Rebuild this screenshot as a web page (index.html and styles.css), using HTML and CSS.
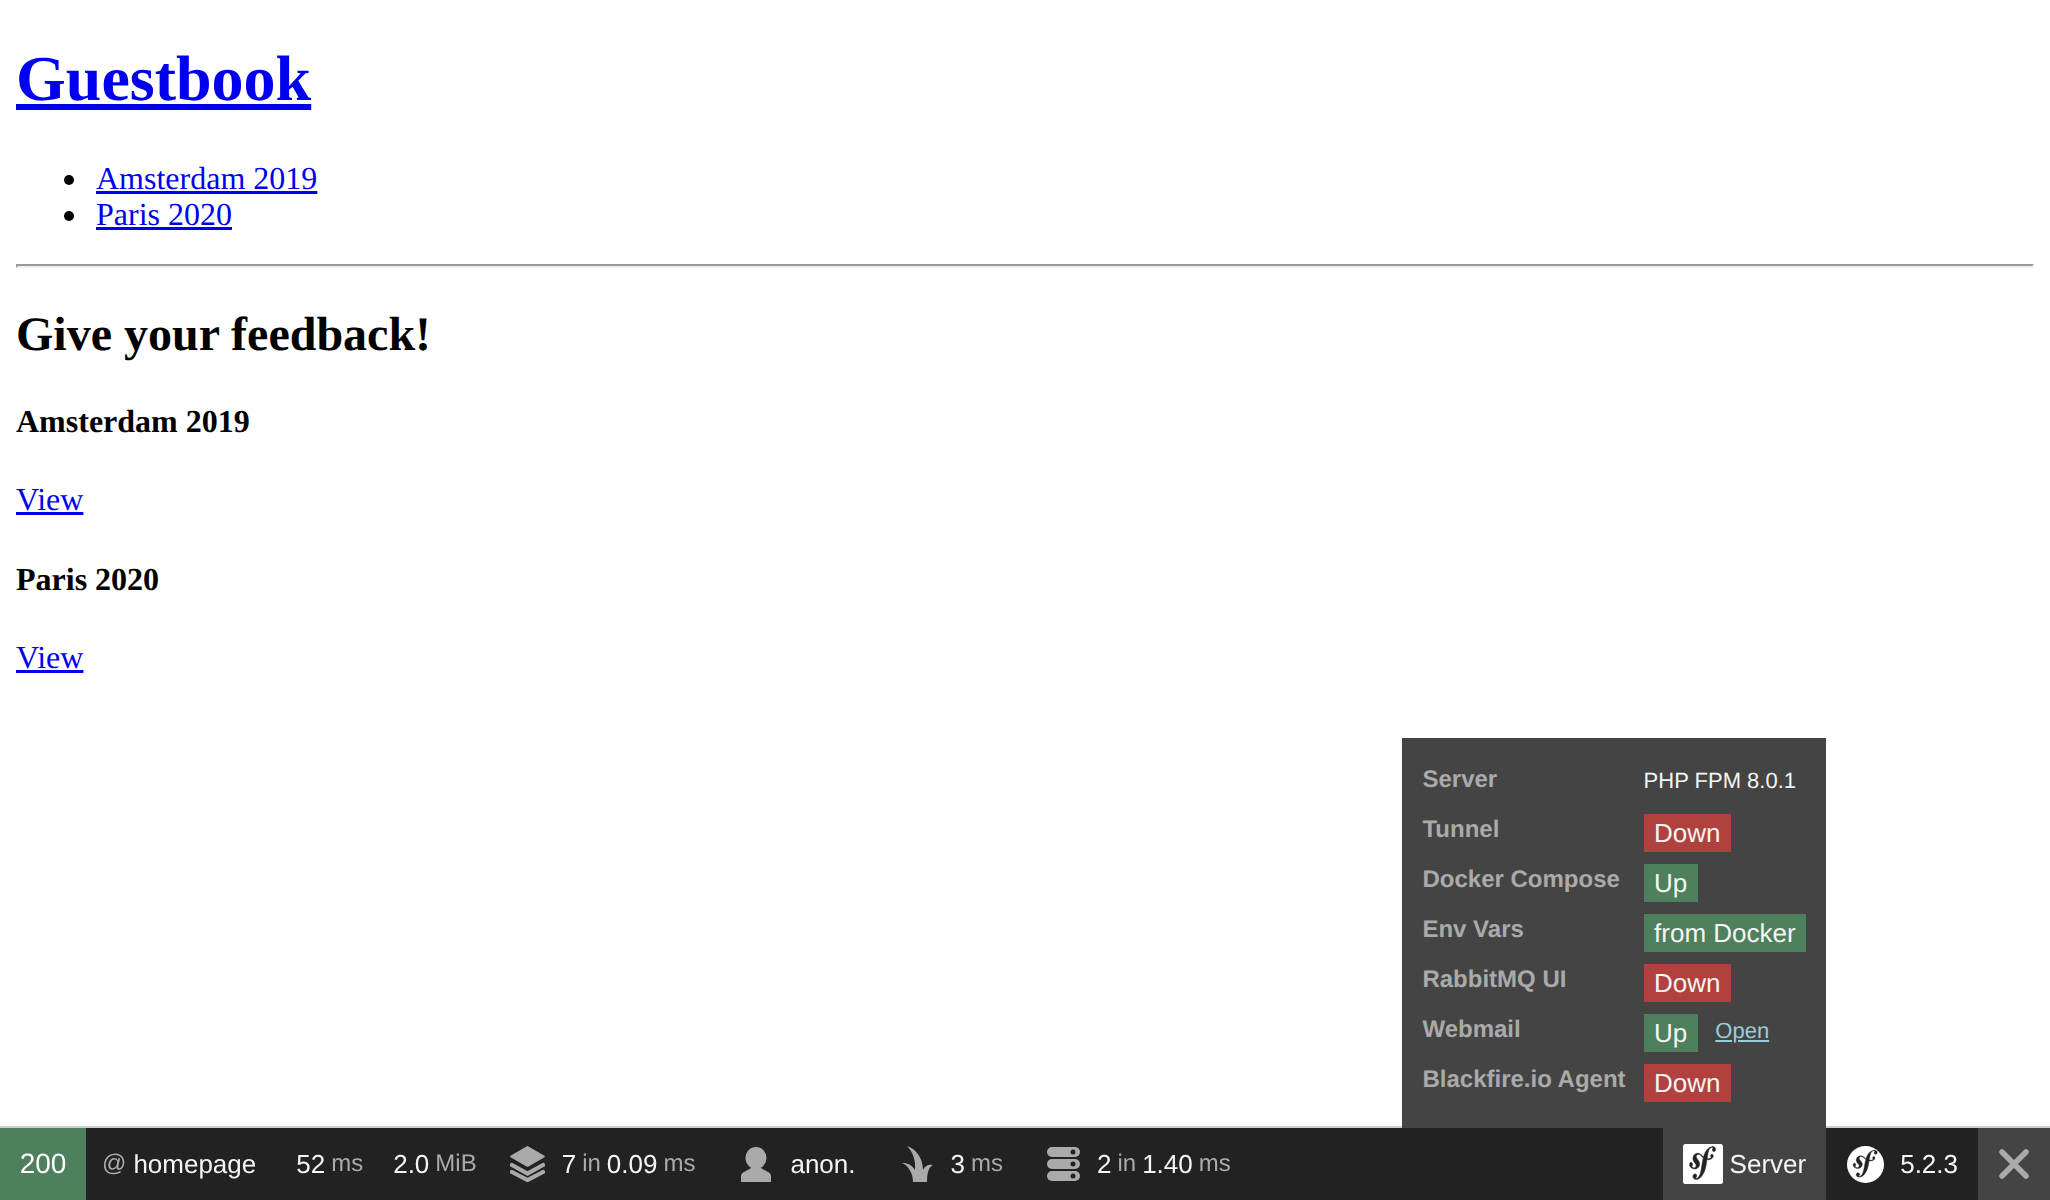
FILE: index.html
```html
<!DOCTYPE html>
<html>
<head>
    <title>Guestbook</title>
    <link rel="stylesheet" href="styles.css">
</head>
<body>
    <h1><a href="#">Guestbook</a></h1>

    <ul>
        <li><a href="#">Amsterdam 2019</a></li>
        <li><a href="#">Paris 2020</a></li>
    </ul>

    <hr />

    <h2>Give your feedback!</h2>

    <h4>Amsterdam 2019</h4>
    <p><a href="#">View</a></p>

    <h4>Paris 2020</h4>
    <p><a href="#">View</a></p>

    <div class="toolbar">
        <div class="status">200</div>

        <div class="block route">
            <span class="label">@</span> <span class="value">homepage</span>
        </div>

        <div class="block time">
            <span class="value">52</span> <span class="label">ms</span>
        </div>

        <div class="block">
            <span class="value">2.0</span> <span class="label">MiB</span>
        </div>

        <div class="block">
            <svg class="icon icon-layers" viewBox="0 0 35 36">
                <path d="M16.5.4a2 2 0 0 1 2 0l15.6 9a1.2 1.2 0 0 1 0 2l-15.6 9a2 2 0 0 1-2 0L.9 11.400a1.200 1.200 0 0 1 0-2z" fill="#aaa" />
                <path d="M2 19l15.500 8.500L33 19M2 26l15.500 8L33 26" fill="none" stroke="#aaa" stroke-width="4.200" stroke-linecap="round" />
            </svg>
            <span class="value">7</span> <span class="label">in</span>
            <span class="value">0.09</span> <span class="label">ms</span>
        </div>

        <div class="block">
            <svg class="icon icon-user" viewBox="0 0 30 35">
                <ellipse cx="15" cy="11" rx="10.500" ry="11" fill="#aaa" />
                <path d="M0 35v-6c0-4 6-5 10-8h10c4 3 10 4 10 8v6z" fill="#aaa" />
            </svg>
            <span class="value">anon.</span>
        </div>

        <div class="block">
            <svg class="icon icon-twig" viewBox="0 0 31 36">
                <path d="M5 0c9 3 16 12 16 24 2-4 5-6 10-5-4 2-6 7-6 17H11c0-8-4-16-11-19 5-.5 10 2 13 7C14 15 11 6 5 0z" fill="#aaa" />
            </svg>
            <span class="value">3</span> <span class="label">ms</span>
        </div>

        <div class="block">
            <svg class="icon icon-db" viewBox="0 0 33 34">
                <rect width="33" height="10" rx="5" fill="#aaa" />
                <rect y="12" width="33" height="10" rx="5" fill="#aaa" />
                <rect y="24" width="33" height="10" rx="5" fill="#aaa" />
                <circle cx="26" cy="5" r="2.500" fill="#222" />
                <circle cx="26" cy="17" r="2.500" fill="#222" />
                <circle cx="26" cy="29" r="2.500" fill="#222" />
            </svg>
            <span class="value">2</span> <span class="label">in</span>
            <span class="value">1.40</span> <span class="label">ms</span>
        </div>

        <div class="block server">
            <svg class="icon icon-sf-box" viewBox="0 0 24 24">
                <rect width="24" height="24" rx="1.500" fill="#fff" />
                <path transform="translate(0 -3.600) scale(1 1.200)" d="M17.247 4.439c-1.22.042-2.283.715-3.075 1.644-.878 1.020-1.461 2.229-1.882 3.461-.753-.614-1.333-1.414-2.54-1.761-.934-.269-1.914-.158-2.817.514-.427.319-.722.801-.863 1.254-.362 1.181.381 2.231.718 2.607l.737.79c.151.155.517.557.338 1.133-.195.627-.96 1.032-1.746.79-.35-.106-.854-.368-.741-.736.046-.152.155-.265.214-.395.053-.113.079-.197.095-.247.144-.47-.053-1.082-.556-1.238-.469-.144-.949-.03-1.135.571-.212.683.118 1.922 1.881 2.465 2.066.636 3.813-.49 4.061-1.958.156-.919-.258-1.603-1.016-2.478l-.618-.683c-.374-.374-.502-1.012-.115-1.501.327-.413.792-.59 1.555-.382 1.113.302 1.609 1.076 2.437 1.698-.342 1.122-.566 2.249-.768 3.259l-.124.753c-.592 3.104-1.044 4.811-2.218 5.789-.236.168-.574.419-1.084.437-.267.008-.353-.175-.358-.255-.006-.187.152-.273.257-.358.157-.085.394-.228.377-.684-.017-.54-.464-1.008-1.109-.987-.484.017-1.221.472-1.193 1.304.028.859.829 1.503 2.036 1.462.645-.022 2.085-.284 3.506-1.973 1.654-1.937 2.116-4.157 2.465-5.782l.389-2.145c.216.026.447.043.698.049 2.059.043 3.089-1.023 3.104-1.798.01-.469-.307-.931-.752-.92-.318.009-.718.221-.813.661-.095.431.655.82.07 1.2-.416.269-1.161.459-2.213.304l.191-1.057c.39-2.002.871-4.462 2.698-4.522.133-.007.62.006.631.328.003.107-.023.135-.149.38-.129.191-.177.354-.171.541.018.51.406.845.967.825.751-.024.967-.756.955-1.132-.03-.883-.96-1.44-2.197-1.4z" fill="#222" stroke="#222" stroke-width=".3" />
            </svg>
            <span class="value">Server</span>

            <div class="panel">
                <b>Server</b>
                <span class="info">PHP FPM 8.0.1</span>
                <b>Tunnel</b>
                <span><span class="badge red">Down</span></span>
                <b>Docker Compose</b>
                <span><span class="badge green">Up</span></span>
                <b>Env Vars</b>
                <span><span class="badge green">from Docker</span></span>
                <b>RabbitMQ UI</b>
                <span><span class="badge red">Down</span></span>
                <b>Webmail</b>
                <span><span class="badge green">Up</span><a class="open" href="#">Open</a></span>
                <b>Blackfire.io Agent</b>
                <span><span class="badge red">Down</span></span>
            </div>
        </div>

        <div class="block version">
            <svg class="icon icon-sf" viewBox="0 0 24 24">
                <circle cx="12" cy="12" r="12" fill="#fff" />
                <path transform="translate(0 -1.900) scale(1 1.070)" d="M17.247 4.439c-1.22.042-2.283.715-3.075 1.644-.878 1.020-1.461 2.229-1.882 3.461-.753-.614-1.333-1.414-2.54-1.761-.934-.269-1.914-.158-2.817.514-.427.319-.722.801-.863 1.254-.362 1.181.381 2.231.718 2.607l.737.79c.151.155.517.557.338 1.133-.195.627-.96 1.032-1.746.79-.35-.106-.854-.368-.741-.736.046-.152.155-.265.214-.395.053-.113.079-.197.095-.247.144-.47-.053-1.082-.556-1.238-.469-.144-.949-.03-1.135.571-.212.683.118 1.922 1.881 2.465 2.066.636 3.813-.49 4.061-1.958.156-.919-.258-1.603-1.016-2.478l-.618-.683c-.374-.374-.502-1.012-.115-1.501.327-.413.792-.59 1.555-.382 1.113.302 1.609 1.076 2.437 1.698-.342 1.122-.566 2.249-.768 3.259l-.124.753c-.592 3.104-1.044 4.811-2.218 5.789-.236.168-.574.419-1.084.437-.267.008-.353-.175-.358-.255-.006-.187.152-.273.257-.358.157-.085.394-.228.377-.684-.017-.54-.464-1.008-1.109-.987-.484.017-1.221.472-1.193 1.304.028.859.829 1.503 2.036 1.462.645-.022 2.085-.284 3.506-1.973 1.654-1.937 2.116-4.157 2.465-5.782l.389-2.145c.216.026.447.043.698.049 2.059.043 3.089-1.023 3.104-1.798.01-.469-.307-.931-.752-.92-.318.009-.718.221-.813.661-.095.431.655.82.07 1.2-.416.269-1.161.459-2.213.304l.191-1.057c.39-2.002.871-4.462 2.698-4.522.133-.007.62.006.631.328.003.107-.023.135-.149.38-.129.191-.177.354-.171.541.018.51.406.845.967.825.751-.024.967-.756.955-1.132-.03-.883-.96-1.44-2.197-1.4z" fill="#222" stroke="#222" stroke-width=".2" />
            </svg>
            <span class="value">5.2.3</span>
        </div>

        <div class="close">
            <svg class="icon-close" viewBox="0 0 30 30">
                <path d="M3 3l24 24M27 3L3 27" fill="none" stroke="#aaa" stroke-width="5.500" stroke-linecap="round" />
            </svg>
        </div>
    </div>
</body>
</html>
```

FILE: styles.css
```css
body {
    margin: 16px;
    font-family: "Liberation Serif", serif;
    font-size: 32px;
    line-height: 36px;
    text-rendering: geometricPrecision;
}

h1 {
    font-size: 64px;
    line-height: 74px;
    margin: 26px 0 44px;
}

ul {
    margin: 44px 0 32px;
    padding-left: 48px;
    list-style: none;
}

li {
    display: flex;
}

li::before {
    content: "";
    width: 10px;
    height: 10px;
    margin: 15px 22px 0 0;
    border-radius: 50%;
    background-color: #000;
}

hr {
    margin: 16px 0;
    height: 0;
    border: 2px solid;
    border-color: #9a9a9a #eee #eee #9a9a9a;
}

h2 {
    font-size: 48px;
    line-height: 50px;
    margin: 42px 0 40px;
}

h4 {
    font-size: 32px;
    margin: 43px 0 42px;
}

p {
    margin: 32px 0 44px;
}

.toolbar {
    position: fixed;
    left: 0;
    right: 0;
    bottom: 0;
    height: 72px;
    display: flex;
    align-items: stretch;
    background-color: #222;
    box-shadow: 0 -2px 0 #ccc;
    color: #f5f5f5;
    font-family: "Liberation Sans", Arial, sans-serif;
    font-size: 26px;
    line-height: 72px;
}

.status {
    width: 86px;
    text-align: center;
    font-size: 28px;
    background-color: #4f805d;
    color: #fff;
}

.block {
    display: flex;
    align-items: center;
    gap: 6px;
    padding: 0 16px;
    white-space: nowrap;
}

.route {
    gap: 7px;
    padding-right: 24px;
}

.time {
    padding-right: 14px;
}

.value {
    font-size: 26px;
}

.label {
    font-size: 24px;
    color: #aaa;
}

.icon {
    display: block;
}

.icon-layers {
    width: 35px;
    height: 36px;
    margin: 0 11px 0 1px;
}

.icon-user {
    width: 30px;
    height: 35px;
    margin: 0 13px 0 14px;
}

.icon-twig {
    width: 31px;
    height: 36px;
    margin: 0 12px 0 14px;
}

.icon-db {
    width: 33px;
    height: 34px;
    margin: 0 11px 0 12px;
}

.server {
    position: relative;
    margin-left: auto;
    padding: 0 20px;
    gap: 7px;
    background-color: #444;
}

.icon-sf-box {
    width: 40px;
    height: 40px;
}

.version {
    padding: 0 20px 0 21px;
    gap: 16px;
}

.icon-sf {
    width: 37px;
    height: 37px;
}

.close {
    width: 72px;
    display: flex;
    align-items: center;
    justify-content: center;
    background-color: #444;
}

.icon-close {
    width: 30px;
    height: 30px;
}

.panel {
    position: absolute;
    right: 0;
    bottom: 72px;
    display: grid;
    grid-template-columns: auto auto;
    column-gap: 18px;
    row-gap: 12px;
    padding: 26px 20px;
    background-color: #444;
    font-size: 24px;
    line-height: 31px;
}

.panel b {
    color: #aaa;
}

.info {
    min-height: 38px;
    font-size: 22px;
    line-height: 34px;
}

.badge {
    display: inline-block;
    height: 38px;
    padding: 0 10.5px;
    font-size: 26px;
    line-height: 38px;
    color: #f5f5f5;
}

.red {
    background-color: #b0413e;
}

.green {
    background-color: #4f805d;
}

.open {
    margin-left: 17.5px;
    font-size: 22px;
    vertical-align: 4px;
    color: #99cdd8;
}
```
